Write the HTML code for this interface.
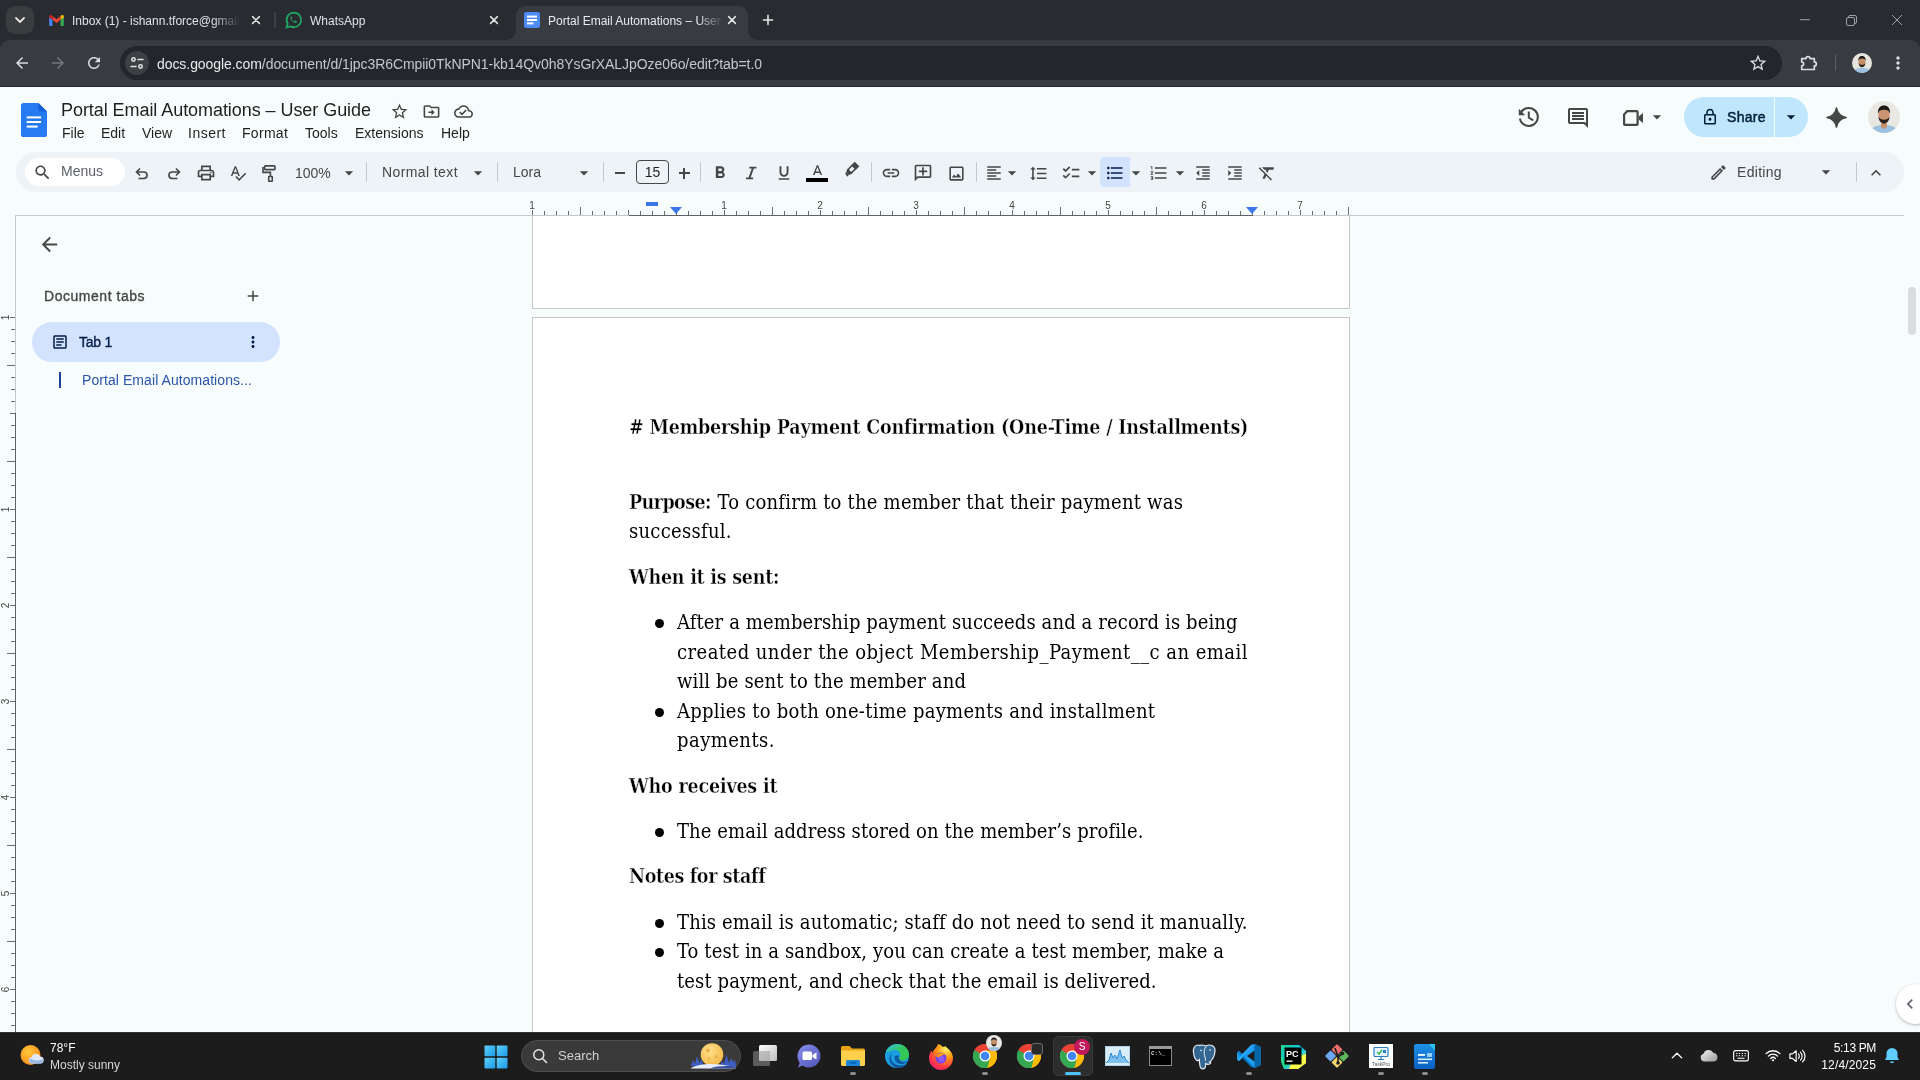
<!DOCTYPE html>
<html lang="en">
<head>
<meta charset="utf-8">
<title>Portal Email Automations – User Guide</title>
<style>
*{box-sizing:border-box;margin:0;padding:0}
html,body{width:1920px;height:1080px;overflow:hidden}
body{position:relative;will-change:transform;background:#f7fcfc;font-family:"Liberation Sans",sans-serif;color:#1f1f1f}
.abs{position:absolute}
svg{position:absolute;display:block;overflow:visible}
.t{position:absolute;white-space:nowrap;line-height:1}

/* ---------- Chrome ---------- */
#tabstrip{position:absolute;left:0;top:0;width:1920px;height:52px;background:#282b2f}
#ctoolbar{position:absolute;left:0;top:40px;width:1920px;height:47px;background:#383b41;border-bottom:1px solid #26282b;border-radius:9px 9px 0 0}
#omni{position:absolute;left:120px;top:46px;width:1662px;height:34px;border-radius:17px;background:#23262a}
.ctab{font-size:12px;color:#dfe2e6;line-height:16px}

/* ---------- Docs header ---------- */
#dtoolbar{position:absolute;left:16px;top:152px;width:1888px;height:40px;border-radius:20px;background:#eef3f7}
.menu{font-size:14px;color:#1f1f1f;top:125px}
.tb{font-size:14px;color:#444746}
.sep{position:absolute;width:1px;height:20px;top:162px;background:#c7c7c7}

/* ---------- Doc ---------- */
.page{position:absolute;left:532px;width:818px;background:#fff;border:1px solid #c7c7c7}
.doc{font-family:"DejaVu Serif Condensed","Liberation Serif",serif;font-size:20px;color:#000}
.dl{position:absolute;white-space:nowrap;line-height:30px;height:30px}
.doc b{font-weight:700;-webkit-text-stroke:0.350px #fff;font-size:19.5px}
.bul{position:absolute;width:9px;height:9px;border-radius:50%;background:#000;left:654.5px}

/* ---------- Taskbar ---------- */
#taskbar{position:absolute;left:0;top:1032px;width:1920px;height:48px;background:#1c1c1c}
.tk{font-size:12px;color:#fff}
</style>
</head>
<body>

<!-- ================= CHROME TAB STRIP ================= -->
<div id="tabstrip"></div>
<div id="ctoolbar"></div>
<div id="omni"></div>

<!-- tab search -->
<div class="abs" style="left:6px;top:6px;width:28px;height:28px;border-radius:9px;background:#3b3c3d"></div>
<svg style="left:14px;top:15px" width="12" height="10" viewBox="0 0 12 10"><path d="M2 3l4 4 4-4" fill="none" stroke="#e3e3e3" stroke-width="1.8" stroke-linecap="round" stroke-linejoin="round"/></svg>

<!-- tab 1 : gmail -->
<svg style="left:48.500px;top:14.500px" width="15" height="11" viewBox="0 0 16 12">
  <path d="M0 1.6V11a1 1 0 0 0 1 1h2.6V5.2z" fill="#4285f4"/>
  <path d="M16 1.6V11a1 1 0 0 1-1 1h-2.6V5.2z" fill="#34a853"/>
  <path d="M12.4 1.2v4L16 2.6V1.6c0-1.3-1.5-2-2.5-1.2z" fill="#fbbc04"/>
  <path d="M3.6 5.2v-4L8 4.6l4.4-3.4v4L8 8.6z" fill="#ea4335"/>
  <path d="M0 1.6v1L3.6 5.2v-4L2.5.4C1.5-.4 0 .3 0 1.6z" fill="#c5221f"/>
</svg>
<div class="t ctab" id="ct1" style="left:72px;top:13px;width:168px;overflow:hidden;-webkit-mask-image:linear-gradient(90deg,#000 140px,transparent 168px)">Inbox (1) - ishann.tforce@gmail.com</div>
<svg style="left:251px;top:15px" width="10" height="10" viewBox="0 0 10 10"><path d="M1.600 1.600l6.800 6.800M8.400 1.600l-6.800 6.800" stroke="#e3e3e3" stroke-width="1.500" stroke-linecap="round"/></svg>
<div class="abs" style="left:274px;top:12px;width:2px;height:16px;background:#3c3f43"></div>

<!-- tab 2 : whatsapp -->
<svg style="left:286px;top:12px" width="16" height="16" viewBox="0 0 16 16">
  <path d="M8 .6a7.3 7.3 0 0 0-6.3 11L.6 15.4l3.9-1A7.3 7.3 0 1 0 8 .6z" fill="none" stroke="#21a565" stroke-width="1.800"/>
  <path d="M5.6 4.2c-.3 0-.7.2-.9.6-.5.9-.2 2.300.9 3.700 1.200 1.400 2.700 2.300 3.800 2.300.6 0 1.200-.4 1.400-.9.100-.3.100-.5-.1-.6l-1.400-.7c-.2-.1-.4 0-.5.1l-.5.6c-.1.100-.3.200-.5.100-.9-.4-1.800-1.200-2.300-2.100-.1-.2 0-.3.100-.5l.4-.5c.1-.1.1-.3.1-.5l-.6-1.400c-.1-.2-.2-.2-.4-.2z" fill="#21a565"/>
</svg>
<div class="t ctab" id="ct2" style="left:310px;top:13px">WhatsApp</div>
<svg style="left:489px;top:15px" width="10" height="10" viewBox="0 0 10 10"><path d="M1.600 1.600l6.800 6.800M8.400 1.600l-6.800 6.800" stroke="#e3e3e3" stroke-width="1.500" stroke-linecap="round"/></svg>

<!-- tab 3 : active -->
<div class="abs" style="left:516px;top:6px;width:232px;height:35px;background:#383b41;border-radius:9px 9px 0 0"></div>
<svg style="left:506px;top:30px" width="10" height="10" viewBox="0 0 10 10"><path d="M10 0v10H0A10 10 0 0 0 10 0z" fill="#383b41"/></svg>
<svg style="left:748px;top:30px" width="10" height="10" viewBox="0 0 10 10"><path d="M0 0v10h10A10 10 0 0 1 0 0z" fill="#383b41"/></svg>
<svg style="left:524px;top:12px" width="16" height="16" viewBox="0 0 16 16">
  <rect x="0" y="0" width="16" height="16" rx="2.5" fill="#4d8bf5"/>
  <rect x="3" y="3.600" width="10" height="2" fill="#fff"/><rect x="3" y="7" width="10" height="2" fill="#fff"/><rect x="3" y="10.400" width="6.500" height="2" fill="#fff"/>
</svg>
<div class="t ctab" id="ct3" style="left:548px;top:13px;width:176px;overflow:hidden;color:#e8eaed;-webkit-mask-image:linear-gradient(90deg,#000 150px,transparent 176px)">Portal Email Automations – User Guide</div>
<svg style="left:727px;top:15px" width="10" height="10" viewBox="0 0 10 10"><path d="M1.600 1.600l6.800 6.800M8.400 1.600l-6.800 6.800" stroke="#e3e3e3" stroke-width="1.500" stroke-linecap="round"/></svg>
<svg style="left:762px;top:14px" width="12" height="12" viewBox="0 0 12 12"><path d="M6 1.400v9.200M1.400 6h9.200" stroke="#e3e3e3" stroke-width="1.600" stroke-linecap="round"/></svg>

<!-- window controls -->
<svg style="left:1800px;top:19px" width="10" height="2" viewBox="0 0 10 2"><path d="M0 .7h10" stroke="#9aa0a6" stroke-width="1"/></svg>
<svg style="left:1846px;top:15px" width="11" height="11" viewBox="0 0 11 11"><rect x=".5" y="2.500" width="8" height="8" rx="1.500" fill="none" stroke="#9aa0a6"/><path d="M2.500 2.500V2A1.500 1.500 0 0 1 4 .5h5A1.500 1.500 0 0 1 10.500 2v5A1.500 1.500 0 0 1 9 8.500h-.5" fill="none" stroke="#9aa0a6"/></svg>
<svg style="left:1892px;top:15px" width="10" height="10" viewBox="0 0 10 10"><path d="M0 0l10 10M10 0L0 10" stroke="#9aa0a6" stroke-width="1"/></svg>

<!-- nav buttons -->
<svg style="left:13px;top:54px" width="18" height="18" viewBox="0 0 24 24"><path d="M20 11H7.830l5.590-5.590L12 4l-8 8 8 8 1.410-1.410L7.830 13H20v-2z" fill="#dadce0"/></svg>
<svg style="left:49px;top:54px" width="18" height="18" viewBox="0 0 24 24"><path d="M12 4l-1.410 1.410L16.170 11H4v2h12.170l-5.580 5.590L12 20l8-8z" fill="#72767b"/></svg>
<svg style="left:85px;top:54px" width="18" height="18" viewBox="0 0 24 24"><path d="M17.650 6.350C16.200 4.900 14.210 4 12 4c-4.420 0-7.990 3.580-7.990 8s3.570 8 7.990 8c3.730 0 6.840-2.550 7.730-6h-2.080c-.82 2.330-3.040 4-5.650 4-3.310 0-6-2.690-6-6s2.690-6 6-6c1.660 0 3.140.69 4.220 1.780L13 11h7V4l-2.350 2.350z" fill="#dadce0"/></svg>

<!-- omnibox content -->
<div class="abs" style="left:125px;top:51px;width:24px;height:24px;border-radius:12px;background:#3c3f44"></div>
<svg style="left:129px;top:55px" width="16" height="16" viewBox="0 0 16 16"><g fill="none" stroke="#e3e3e3" stroke-width="1.500" stroke-linecap="round"><circle cx="4.500" cy="4.500" r="1.700"/><path d="M9 4.500h5"/><circle cx="11.500" cy="11.500" r="1.700"/><path d="M2 11.500h5"/></g></svg>
<div class="t" id="url" style="left:157px;top:57px;font-size:14px;letter-spacing:-0.066px;color:#e8eaed">docs.google.com<span style="color:#c4c7cb">/document/d/1jpc3R6Cmpii0TkNPN1-kb14Qv0h8YsGrXALJpOze06o/edit?tab=t.0</span></div>
<svg style="left:1748px;top:53px" width="20" height="20" viewBox="0 0 24 24"><path d="M22 9.240l-7.190-.62L12 2 9.190 8.630 2 9.240l5.460 4.730L5.820 21 12 17.270 18.180 21l-1.630-7.030L22 9.240zM12 15.400l-3.760 2.270 1-4.280-3.320-2.880 4.380-.38L12 6.100l1.710 4.040 4.380.38-3.320 2.880 1 4.280L12 15.400z" fill="#dadce0"/></svg>
<svg style="left:1798px;top:53px" width="20" height="20" viewBox="0 0 20 20"><path d="M3.700 5.600h4.300a2 2 0 0 1 4 0h4.300v3.300a2 2 0 0 1 0 4v3.600H3.700v-3.700a1.900 1.900 0 0 0 0-3.800z" fill="none" stroke="#dadce0" stroke-width="1.700" stroke-linejoin="round"/></svg>
<div class="abs" style="left:1835px;top:55px;width:1px;height:16px;background:#5b5e63"></div>
<svg style="left:1852px;top:53px" width="20" height="20" viewBox="0 0 20 20">
  <defs><clipPath id="av1"><circle cx="10" cy="10" r="10"/></clipPath></defs>
  <g clip-path="url(#av1)"><rect width="20" height="20" fill="#e6e4df"/><path d="M1 20c.5-4 4-5 9-5s8.500 1 9 5z" fill="#9cc0e0"/><ellipse cx="10" cy="9" rx="3.600" ry="4.600" fill="#c58f6b"/><path d="M6.300 8c-.3-3.500 1.500-5 3.700-5s4 1.500 3.700 5c-.5-1.800-1.500-2.500-3.700-2.500S6.800 6.200 6.300 8z" fill="#1f1a17"/><path d="M6.600 10c.3 3 1.800 4.200 3.400 4.200s3.100-1.200 3.400-4.200c-.8 1.500-2 1.800-3.400 1.800S7.400 11.500 6.600 10z" fill="#2a211c"/></g>
</svg>
<svg style="left:1888px;top:53px" width="20" height="20" viewBox="0 0 24 24"><path d="M12 8c1.100 0 2-.9 2-2s-.9-2-2-2-2 .9-2 2 .9 2 2 2zm0 2c-1.100 0-2 .9-2 2s.9 2 2 2 2-.9 2-2-.9-2-2-2zm0 6c-1.100 0-2 .9-2 2s.9 2 2 2 2-.9 2-2-.9-2-2-2z" fill="#dadce0"/></svg>

<!-- ================= DOCS HEADER ================= -->
<div id="dtoolbar"></div>

<!-- docs logo -->
<svg style="left:21px;top:103px" width="26" height="34" viewBox="0 0 26 34">
  <path d="M2.600 0H17.400l8.600 8.600v22.800a2.600 2.600 0 0 1-2.600 2.600H2.600A2.600 2.600 0 0 1 0 31.400V2.600A2.600 2.600 0 0 1 2.600 0z" fill="#267bf1"/>
  <path d="M17.400 0l8.600 8.600h-6.400a2.200 2.200 0 0 1-2.200-2.200z" fill="#1560d4"/>
  <rect x="5.700" y="13.400" width="14.400" height="2" fill="#fff"/><rect x="5.700" y="18" width="14.400" height="2" fill="#fff"/><rect x="5.700" y="22.600" width="11" height="2" fill="#fff"/>
</svg>
<div class="t" id="dtitle" style="left:61px;top:99px;font-size:18px;letter-spacing:-0.06px;line-height:22px;color:#1f1f1f">Portal Email Automations – User Guide</div>
<svg style="left:389.500px;top:101.500px" width="19" height="19" viewBox="0 0 24 24"><path d="M22 9.240l-7.190-.62L12 2 9.190 8.630 2 9.240l5.460 4.730L5.820 21 12 17.270 18.180 21l-1.630-7.030L22 9.240zM12 15.400l-3.760 2.270 1-4.280-3.320-2.880 4.380-.38L12 6.100l1.710 4.040 4.380.38-3.320 2.880 1 4.280L12 15.400z" fill="#444746"/></svg>
<svg style="left:421.500px;top:101.500px" width="19" height="19" viewBox="0 0 24 24"><path d="M20 6h-8l-2-2H4c-1.100 0-2 .9-2 2v12c0 1.100.9 2 2 2h16c1.100 0 2-.9 2-2V8c0-1.100-.9-2-2-2zm0 12H4V6h5.170l2 2H20v10zm-8-1l4-4-4-4v3H8v2h4v3z" fill="#444746"/></svg>
<svg style="left:453.500px;top:101.500px" width="19" height="19" viewBox="0 0 24 24"><path d="M19.350 10.040C18.670 6.590 15.640 4 12 4 9.110 4 6.600 5.640 5.350 8.040 2.340 8.360 0 10.910 0 14c0 3.310 2.690 6 6 6h13c2.760 0 5-2.240 5-5 0-2.640-2.050-4.780-4.650-4.960zM19 18H6c-2.210 0-4-1.790-4-4 0-2.050 1.530-3.760 3.560-3.970l1.070-.11.5-.95C8.080 7.140 9.940 6 12 6c2.620 0 4.880 1.860 5.390 4.430l.3 1.500 1.530.11c1.560.1 2.780 1.410 2.780 2.960 0 1.650-1.350 3-3 3zm-9-3.820l-2.090-2.090L6.500 13.500 10 17l6.010-6.010-1.410-1.410z" fill="#444746"/></svg>
<div class="t menu" id="m0" style="left:62px;line-height:16px">File</div>
<div class="t menu" id="m1" style="left:101px;line-height:16px">Edit</div>
<div class="t menu" id="m2" style="left:142px;line-height:16px">View</div>
<div class="t menu" id="m3" style="left:188px;line-height:16px;letter-spacing:0.500px">Insert</div>
<div class="t menu" id="m4" style="left:242px;line-height:16px;letter-spacing:0.300px">Format</div>
<div class="t menu" id="m5" style="left:305px;line-height:16px">Tools</div>
<div class="t menu" id="m6" style="left:355px;line-height:16px">Extensions</div>
<div class="t menu" id="m7" style="left:441px;line-height:16px">Help</div>
<svg style="left:1517px;top:105px" width="24" height="24" viewBox="0 0 24 24"><path d="M3.340 8.920A9 9 0 1 1 2.940 13.560" fill="none" stroke="#444746" stroke-width="2.100"/><path d="M1.800 3.800v6.400h6.400z" fill="#444746"/><path d="M11.800 6.500v6l4.300 2.800" fill="none" stroke="#444746" stroke-width="2"/></svg>
<svg style="left:1566px;top:106px" width="24" height="24" viewBox="0 0 24 24"><path d="M21.990 4c0-1.100-.89-2-1.990-2H4c-1.100 0-2 .9-2 2v12c0 1.100.9 2 2 2h14l4 4-.01-18zM20 4v13.170L18.830 16H4V4h16zM6 12h12v2H6zm0-3h12v2H6zm0-3h12v2H6z" fill="#444746"/></svg>
<svg style="left:1620px;top:105px" width="24" height="24" viewBox="0 0 24 24"><path d="M7.300 6.100h9.300a1 1 0 0 1 1 1v11.800a1 1 0 0 1-1 1H5.100a1 1 0 0 1-1-1V9.600z" fill="none" stroke="#444746" stroke-width="2.200" stroke-linejoin="round"/><path d="M18.700 11.500L23 8v10l-4.300-3.500z" fill="#444746"/></svg>
<svg style="left:1647px;top:107px" width="20" height="20" viewBox="0 0 24 24"><path d="M7 10l5 5 5-5z" fill="#444746"/></svg>
<div class="abs" style="left:1684px;top:97px;width:124px;height:40px;border-radius:20px;background:#bfe6fd"></div>
<div class="abs" style="left:1774px;top:97px;width:1px;height:40px;background:#f7fcfc"></div>
<svg style="left:1701px;top:108px" width="18" height="18" viewBox="0 0 24 24"><path d="M18 8h-1V6c0-2.760-2.240-5-5-5S7 3.240 7 6v2H6c-1.100 0-2 .9-2 2v10c0 1.100.9 2 2 2h12c1.100 0 2-.9 2-2V10c0-1.100-.9-2-2-2zM9 6c0-1.660 1.340-3 3-3s3 1.340 3 3v2H9V6zm9 14H6V10h12v10zm-6-3c1.100 0 2-.9 2-2s-.9-2-2-2-2 .9-2 2 .9 2 2 2z" fill="#001d35"/></svg>
<div class="t" id="share" style="left:1727px;top:109px;font-size:14px;line-height:16px;color:#001d35;-webkit-text-stroke:0.450px #001d35;letter-spacing:0.300px">Share</div>
<svg style="left:1781px;top:107px" width="20" height="20" viewBox="0 0 24 24"><path d="M7 10l5 5 5-5z" fill="#001d35"/></svg>
<svg style="left:1824.500px;top:105.500px" width="23" height="23" viewBox="0 0 24 24"><path d="M12 2C13 7.500 16.500 11 22 12 16.500 13 13 16.500 12 22 11 16.500 7.500 13 2 12 7.500 11 11 7.500 12 2z" fill="#444746" stroke="#444746" stroke-width="1.600" stroke-linejoin="round"/></svg>
<svg style="left:1868px;top:101px" width="32" height="32" viewBox="0 0 32 32">
  <defs><clipPath id="av2"><circle cx="16" cy="16" r="16"/></clipPath></defs>
  <g clip-path="url(#av2)"><rect width="32" height="32" fill="#e9e7e2"/><path d="M2 32c1-6 6-8 14-8s13 2 14 8z" fill="#9cc0e0"/><path d="M13 22h6v4l-3 2-3-2z" fill="#c58f6b"/><ellipse cx="16" cy="14.500" rx="5.600" ry="7.200" fill="#c9946f"/><path d="M10 13c-.6-6 2.500-8.500 6-8.500s6.600 2.500 6 8.500c-.8-3-2.400-4.200-6-4.200S10.800 10 10 13z" fill="#1d1815"/><path d="M10.500 15.500c.4 5 2.900 7 5.500 7s5.100-2 5.500-7c-1.200 2.600-3.100 3.200-5.500 3.200s-4.300-.6-5.500-3.200z" fill="#2a211c"/></g>
</svg>


<!-- docs toolbar items -->
<div class="abs" style="left:25px;top:158px;width:100px;height:28px;border-radius:14px;background:#fff"></div>
<svg style="left:33px;top:163px" width="19" height="19" viewBox="0 0 24 24"><path d="M15.500 14h-.79l-.28-.27C15.410 12.590 16 11.110 16 9.500 16 5.910 13.090 3 9.500 3S3 5.910 3 9.500 5.910 16 9.500 16c1.610 0 3.090-.59 4.230-1.570l.27.280v.79l5 4.990L20.490 19l-4.990-5zm-6 0C7.010 14 5 11.990 5 9.500S7.010 5 9.500 5 14 7.010 14 9.500 11.990 14 9.500 14z" fill="#444746"/></svg>
<div class="t tb" id="menus" style="left:61px;top:163px;line-height:16px;color:#5f6368">Menus</div>
<svg style="left:134px;top:166px" width="16" height="16" viewBox="0 0 16 16"><path d="M6 2.500L2.500 6 6 9.500M3 6h6.800a3.250 3.250 0 0 1 0 6.500H4.500" fill="none" stroke="#444746" stroke-width="1.600"/></svg>
<svg style="left:166px;top:166px" width="16" height="16" viewBox="0 0 16 16"><path d="M10 2.500L13.500 6 10 9.500M13 6H6.200a3.250 3.250 0 0 0 0 6.500h5.300" fill="none" stroke="#444746" stroke-width="1.600"/></svg>
<svg style="left:196px;top:163px" width="20" height="20" viewBox="0 0 24 24"><path d="M19 8h-1V3H6v5H5c-1.660 0-3 1.340-3 3v6h4v4h12v-4h4v-6c0-1.660-1.340-3-3-3zM8 5h8v3H8V5zm8 12v2H8v-4h8v2zm2-2v-2H6v2H4v-4c0-.55.450-1 1-1h14c.55 0 1 .45 1 1v4h-2z" fill="#444746"/></svg>
<svg style="left:196px;top:163px" width="20" height="20" viewBox="0 0 24 24"><circle cx="18" cy="11.500" r="1" fill="#444746"/></svg>
<svg style="left:229px;top:163.500px" width="18" height="18" viewBox="0 0 24 24"><path d="M12.450 16h2.090L9.430 3H7.570L2.460 16h2.090l1.120-3h5.640l1.140 3zm-6.020-5L8.500 5.480 10.570 11H6.430zm15.160.590l-8.090 8.090L9.830 16l-1.410 1.410 5.090 5.090L23 13l-1.410-1.410z" fill="#444746"/></svg>
<svg style="left:260px;top:163px" width="18" height="20" viewBox="0 0 18 20"><g fill="none" stroke="#444746" stroke-width="1.600"><rect x="4.600" y="2.900" width="10.400" height="3.700" rx=".8"/><path d="M4.600 4.700H3v4.700h7.400V13"/><rect x="8.700" y="13.500" width="3.600" height="4.800" rx=".6"/></g></svg>
<div class="t tb" id="zoom" style="left:295px;top:165px;line-height:16px">100%</div>
<svg style="left:339px;top:163px" width="20" height="20" viewBox="0 0 24 24"><path d="M7 10l5 5 5-5z" fill="#444746"/></svg>
<div class="sep" style="left:366px"></div>
<div class="t tb" id="ntext" style="left:382px;top:164px;line-height:16px;letter-spacing:0.400px">Normal text</div>
<svg style="left:467.5px;top:163px" width="20" height="20" viewBox="0 0 24 24"><path d="M7 10l5 5 5-5z" fill="#444746"/></svg>
<div class="sep" style="left:497px"></div>
<div class="t tb" id="lora" style="left:513px;top:164px;line-height:16px">Lora</div>
<svg style="left:574px;top:163px" width="20" height="20" viewBox="0 0 24 24"><path d="M7 10l5 5 5-5z" fill="#444746"/></svg>
<div class="sep" style="left:603px"></div>
<div class="abs" style="left:615px;top:172.200px;width:10px;height:1.600px;background:#444746"></div>
<div class="abs" style="left:636px;top:160px;width:33px;height:24px;border:1px solid #444746;border-radius:4px"></div>
<div class="t tb" id="fsz" style="left:636px;top:164px;width:33px;text-align:center;line-height:16px;color:#1f1f1f">15</div>
<div class="abs" style="left:678.500px;top:172.200px;width:11px;height:1.600px;background:#444746"></div><div class="abs" style="left:683.200px;top:167.500px;width:1.600px;height:11px;background:#444746"></div>
<div class="sep" style="left:700px"></div>
<svg style="left:710px;top:163px" width="20" height="20" viewBox="0 0 24 24"><path d="M15.600 10.790c.97-.67 1.650-1.770 1.650-2.790 0-2.260-1.750-4-4-4H7v14h7.040c2.090 0 3.710-1.700 3.710-3.790 0-1.520-.86-2.820-2.150-3.420zM10 6.500h3c.83 0 1.500.67 1.500 1.500s-.67 1.500-1.500 1.500h-3v-3zm3.500 9H10v-3h3.500c.83 0 1.500.67 1.500 1.500s-.67 1.500-1.500 1.500z" fill="#444746"/></svg>
<svg style="left:741px;top:163px" width="20" height="20" viewBox="0 0 24 24"><path d="M10 4.500h8.500v2.200h-3.100l-3.800 10.600h2.900v2.200H6v-2.200h3.100l3.800-10.600H10z" fill="#444746"/></svg>
<svg style="left:775px;top:164px" width="18" height="18" viewBox="0 0 24 24"><path d="M12 17c3.310 0 6-2.690 6-6V3h-2.500v8c0 1.930-1.570 3.500-3.500 3.500S8.500 12.930 8.500 11V3H6v8c0 3.310 2.690 6 6 6zm-7 2v2h14v-2H5z" fill="#444746"/></svg>
<svg style="left:808.500px;top:163px" width="17" height="17" viewBox="0 0 24 24"><path d="M11 3L5.500 17h2.250l1.120-3h6.250l1.120 3h2.250L13 3h-2zm-1.380 9L12 5.670 14.380 12H9.620z" fill="#444746"/></svg>
<div class="abs" style="left:806px;top:178px;width:22px;height:4px;background:#000"></div>
<svg style="left:840px;top:159.500px" width="21" height="21" viewBox="0 0 24 24"><g transform="rotate(45 12 12)"><path d="M8.300 1.500h7.400v5H8.300z" fill="#444746"/><path d="M9.200 6.500h5.600v7H9.200z" fill="none" stroke="#444746" stroke-width="1.800"/><path d="M8.300 13.500h7.400l-1.500 3.400H9.800z" fill="#444746"/><path d="M9.800 16.900h4.400v2.800l-4.400 -1.200z" fill="#444746"/></g></svg>
<div class="sep" style="left:871px"></div>
<svg style="left:881px;top:163px" width="20" height="20" viewBox="0 0 24 24"><path d="M3.900 12c0-1.710 1.390-3.100 3.100-3.100h4V7H7c-2.760 0-5 2.240-5 5s2.240 5 5 5h4v-1.900H7c-1.710 0-3.100-1.390-3.100-3.100zM8 13h8v-2H8v2zm9-6h-4v1.900h4c1.710 0 3.100 1.390 3.100 3.100s-1.390 3.100-3.100 3.100h-4V17h4c2.760 0 5-2.240 5-5s-2.240-5-5-5z" fill="#444746"/></svg>
<svg style="left:913px;top:162.500px" width="20" height="20" viewBox="0 0 24 24"><path d="M22 4c0-1.100-.9-2-2-2H4c-1.100 0-2 .9-2 2v12c0 1.100.9 2 2 2h14l4 4V4zm-2 13.170L18.830 16H4V4h16v13.170zM13 5h-2v4H7v2h4v4h2v-4h4V9h-4z" fill="#444746" transform="translate(24 0) scale(-1 1)"/></svg>
<svg style="left:946.500px;top:163.500px" width="19" height="19" viewBox="0 0 24 24"><path d="M19 5v14H5V5h14m0-2H5c-1.100 0-2 .9-2 2v14c0 1.100.9 2 2 2h14c1.100 0 2-.9 2-2V5c0-1.100-.9-2-2-2zm-4.860 8.860l-3 3.870L9 13.140 6 17h12l-3.860-5.140z" fill="#444746"/></svg>
<div class="sep" style="left:976px"></div>
<svg style="left:985px;top:164px" width="18" height="18" viewBox="0 0 24 24"><path d="M15 15H3v2h12v-2zm0-8H3v2h12V7zM3 13h18v-2H3v2zm0 8h18v-2H3v2zM3 3v2h18V3H3z" fill="#444746"/></svg>
<svg style="left:1002px;top:163px" width="20" height="20" viewBox="0 0 24 24"><path d="M7 10l5 5 5-5z" fill="#444746"/></svg>
<svg style="left:1028.500px;top:163.500px" width="19" height="19" viewBox="0 0 24 24"><path d="M6 7h2.500L5 3.500 1.500 7H4v10H1.500L5 20.500 8.500 17H6V7zm4-2v2h12V5H10zm0 14h12v-2H10v2zm0-6h12v-2H10v2z" fill="#444746"/></svg>
<svg style="left:1061px;top:163px" width="20" height="20" viewBox="0 0 24 24"><path d="M22 7h-9v2h9V7zm0 8h-9v2h9v-2zM5.540 11L2 7.460l1.410-1.410 2.120 2.120 4.240-4.240 1.410 1.410L5.540 11zm0 8L2 15.460l1.410-1.410 2.120 2.120 4.240-4.240 1.410 1.410L5.540 19z" fill="#444746"/></svg>
<svg style="left:1082px;top:163px" width="20" height="20" viewBox="0 0 24 24"><path d="M7 10l5 5 5-5z" fill="#444746"/></svg>
<div class="abs" style="left:1100px;top:157px;width:30px;height:30px;border-radius:4px 0 0 4px;background:#d3e3fd"></div>
<svg style="left:1105px;top:163px" width="20" height="20" viewBox="0 0 24 24"><path d="M4 10.500c-.83 0-1.500.67-1.500 1.500s.67 1.500 1.500 1.500 1.500-.67 1.500-1.500-.67-1.500-1.500-1.500zm0-6c-.83 0-1.500.67-1.500 1.500S3.170 7.500 4 7.500 5.500 6.830 5.500 6 4.830 4.500 4 4.500zm0 12c-.83 0-1.500.68-1.500 1.500s.68 1.500 1.500 1.500 1.500-.68 1.500-1.500-.67-1.500-1.500-1.500zM7 19h14v-2H7v2zm0-6h14v-2H7v2zm0-8v2h14V5H7z" fill="#041e49"/></svg>
<svg style="left:1126px;top:163px" width="20" height="20" viewBox="0 0 24 24"><path d="M7 10l5 5 5-5z" fill="#444746"/></svg>
<svg style="left:1149px;top:163px" width="20" height="20" viewBox="0 0 24 24"><path d="M2 17h2v.5H3v1h1v.5H2v1h3v-4H2v1zm1-9h1V4H2v1h1v3zm-1 3h1.800L2 13.100v.9h3v-1H3.200L5 10.900V10H2v1zm5-6v2h14V5H7zm0 14h14v-2H7v2zm0-6h14v-2H7v2z" fill="#444746"/></svg>
<svg style="left:1170px;top:163px" width="20" height="20" viewBox="0 0 24 24"><path d="M7 10l5 5 5-5z" fill="#444746"/></svg>
<svg style="left:1194px;top:164px" width="18" height="18" viewBox="0 0 24 24"><path d="M11 17h10v-2H11v2zm-8-5l4 4V8l-4 4zm0 9h18v-2H3v2zM3 3v2h18V3H3zm8 6h10V7H11v2zm0 4h10v-2H11v2z" fill="#444746"/></svg>
<svg style="left:1226px;top:164px" width="18" height="18" viewBox="0 0 24 24"><path d="M3 21h18v-2H3v2zM3 8v8l4-4-4-4zm8 9h10v-2H11v2zM3 3v2h18V3H3zm8 6h10V7H11v2zm0 4h10v-2H11v2z" fill="#444746"/></svg>
<svg style="left:1257px;top:163px" width="20" height="20" viewBox="0 0 24 24"><path d="M3.270 5L2 6.270l6.970 6.970L6.500 19h3l1.570-3.660L16.730 21 18 19.730 3.550 5.270 3.270 5zM6 5v.18L8.820 8h2.400l-.72 1.680 2.100 2.100L14.210 8H20V5H6z" fill="#444746"/></svg>
<div class="abs" style="left:1696px;top:157px;width:151px;height:30px;border-radius:15px;background:#edf1f8"></div>
<svg style="left:1708.5px;top:162.5px" width="19" height="19" viewBox="0 0 24 24"><path d="M14.060 9.020l.92.920L5.920 19H5v-.92l9.060-9.060M17.660 3c-.25 0-.51.100-.7.290l-1.830 1.830 3.750 3.750 1.830-1.830c.39-.39.39-1.020 0-1.410l-2.340-2.340c-.2-.2-.45-.29-.71-.29zm-3.600 3.190L3 17.250V21h3.750L17.810 9.940l-3.750-3.750z" fill="#444746"/></svg>
<div class="t tb" id="editing" style="left:1737px;top:164px;line-height:16px;letter-spacing:0.300px">Editing</div>
<svg style="left:1816px;top:162px" width="20" height="20" viewBox="0 0 24 24"><path d="M7 10l5 5 5-5z" fill="#444746"/></svg>
<div class="sep" style="left:1856px"></div>
<svg style="left:1866px;top:163px" width="20" height="20" viewBox="0 0 24 24"><path d="M12 8l-6 6 1.410 1.410L12 10.830l4.590 4.580L18 14z" fill="#444746"/></svg>

<!-- ================= DOC AREA ================= -->

<!-- rulers / frame -->
<div class="abs" style="left:15px;top:215px;width:1889px;height:1px;background:#c7c9c9"></div>
<div class="abs" style="left:15px;top:215px;width:1px;height:198px;background:#c7c9c9"></div>
<div class="abs" style="left:15px;top:413px;width:1px;height:619px;background:#5f6368"></div>
<div class="abs" style="left:629px;top:215px;width:624px;height:1px;background:#5f6368"></div>
<svg style="left:0;top:0" width="1920" height="220" viewBox="0 0 1920 220"><path d="M532.5 210v5M544.5 211v4M556.5 211v4M568.5 211v4M580.5 207v8M592.5 211v4M604.5 211v4M616.5 211v4M628.5 210v5M640.5 211v4M652.5 211v4M664.5 211v4M676.5 207v8M688.5 211v4M700.5 211v4M712.5 211v4M724.5 210v5M736.5 211v4M748.5 211v4M760.5 211v4M772.5 207v8M784.5 211v4M796.5 211v4M808.5 211v4M820.5 210v5M832.5 211v4M844.5 211v4M856.5 211v4M868.5 207v8M880.5 211v4M892.5 211v4M904.5 211v4M916.5 210v5M928.5 211v4M940.5 211v4M952.5 211v4M964.5 207v8M976.5 211v4M988.5 211v4M1000.5 211v4M1012.5 210v5M1024.5 211v4M1036.5 211v4M1048.5 211v4M1060.5 207v8M1072.5 211v4M1084.5 211v4M1096.5 211v4M1108.5 210v5M1120.5 211v4M1132.5 211v4M1144.5 211v4M1156.5 207v8M1168.5 211v4M1180.5 211v4M1192.5 211v4M1204.5 210v5M1216.5 211v4M1228.5 211v4M1240.5 211v4M1252.5 207v8M1264.5 211v4M1276.5 211v4M1288.5 211v4M1300.5 210v5M1312.5 211v4M1324.5 211v4M1336.5 211v4M1348.5 207v8" stroke="#6b6f73" stroke-width="1" fill="none"/><text x="532" y="209" font-family="Liberation Sans, sans-serif" font-size="10" fill="#444746" text-anchor="middle">1</text><text x="724" y="209" font-family="Liberation Sans, sans-serif" font-size="10" fill="#444746" text-anchor="middle">1</text><text x="820" y="209" font-family="Liberation Sans, sans-serif" font-size="10" fill="#444746" text-anchor="middle">2</text><text x="916" y="209" font-family="Liberation Sans, sans-serif" font-size="10" fill="#444746" text-anchor="middle">3</text><text x="1012" y="209" font-family="Liberation Sans, sans-serif" font-size="10" fill="#444746" text-anchor="middle">4</text><text x="1108" y="209" font-family="Liberation Sans, sans-serif" font-size="10" fill="#444746" text-anchor="middle">5</text><text x="1204" y="209" font-family="Liberation Sans, sans-serif" font-size="10" fill="#444746" text-anchor="middle">6</text><text x="1300" y="209" font-family="Liberation Sans, sans-serif" font-size="10" fill="#444746" text-anchor="middle">7</text><rect x="646" y="202" width="12" height="4" fill="#3b78e7"/><path d="M670 207h12l-6 7z" fill="#3b78e7"/><path d="M1246 207h12l-6 7z" fill="#3b78e7"/></svg>
<svg style="left:0;top:0" width="20" height="1032" viewBox="0 0 20 1032"><path d="M10 317.5h5M11 329.5h4M11 341.5h4M11 353.5h4M7 365.5h8M11 377.5h4M11 389.5h4M11 401.5h4M10 413.5h5M11 425.5h4M11 437.5h4M11 449.5h4M7 461.5h8M11 473.5h4M11 485.5h4M11 497.5h4M10 509.5h5M11 521.5h4M11 533.5h4M11 545.5h4M7 557.5h8M11 569.5h4M11 581.5h4M11 593.5h4M10 605.5h5M11 617.5h4M11 629.5h4M11 641.5h4M7 653.5h8M11 665.5h4M11 677.5h4M11 689.5h4M10 701.5h5M11 713.5h4M11 725.5h4M11 737.5h4M7 749.5h8M11 761.5h4M11 773.5h4M11 785.5h4M10 797.5h5M11 809.5h4M11 821.5h4M11 833.5h4M7 845.5h8M11 857.5h4M11 869.5h4M11 881.5h4M10 893.5h5M11 905.5h4M11 917.5h4M11 929.5h4M7 941.5h8M11 953.5h4M11 965.5h4M11 977.5h4M10 989.5h5M11 1001.5h4M11 1013.5h4M11 1025.5h4" stroke="#6b6f73" stroke-width="1" fill="none"/><text transform="translate(8.500 317.5) rotate(-90)" font-family="Liberation Sans, sans-serif" font-size="10" fill="#444746" text-anchor="middle">1</text><text transform="translate(8.500 509.5) rotate(-90)" font-family="Liberation Sans, sans-serif" font-size="10" fill="#444746" text-anchor="middle">1</text><text transform="translate(8.500 605.5) rotate(-90)" font-family="Liberation Sans, sans-serif" font-size="10" fill="#444746" text-anchor="middle">2</text><text transform="translate(8.500 701.5) rotate(-90)" font-family="Liberation Sans, sans-serif" font-size="10" fill="#444746" text-anchor="middle">3</text><text transform="translate(8.500 797.5) rotate(-90)" font-family="Liberation Sans, sans-serif" font-size="10" fill="#444746" text-anchor="middle">4</text><text transform="translate(8.500 893.5) rotate(-90)" font-family="Liberation Sans, sans-serif" font-size="10" fill="#444746" text-anchor="middle">5</text><text transform="translate(8.500 989.5) rotate(-90)" font-family="Liberation Sans, sans-serif" font-size="10" fill="#444746" text-anchor="middle">6</text></svg>

<!-- sidebar -->
<svg style="left:37.500px;top:232.500px" width="23" height="23" viewBox="0 0 24 24"><path d="M20 11H7.830l5.590-5.590L12 4l-8 8 8 8 1.410-1.410L7.830 13H20v-2z" fill="#444746"/></svg>
<div class="t" id="dtabs" style="left:44px;top:288px;font-size:14px;line-height:16px;color:#444746;-webkit-text-stroke:0.350px #444746;letter-spacing:0.530px">Document tabs</div>
<svg style="left:244px;top:287px" width="18" height="18" viewBox="0 0 24 24"><path d="M19 13h-6v6h-2v-6H5v-2h6V5h2v6h6v2z" fill="#444746"/></svg>
<div class="abs" style="left:32px;top:322px;width:248px;height:40px;border-radius:20px;background:#d3e3fd"></div>
<svg style="left:51px;top:333px" width="18" height="18" viewBox="0 0 24 24"><path d="M19 5v14H5V5h14m0-2H5c-1.100 0-2 .9-2 2v14c0 1.100.9 2 2 2h14c1.100 0 2-.9 2-2V5c0-1.100-.9-2-2-2zm-5 14H7v-2h7v2zm3-4H7v-2h10v2zm0-4H7V7h10v2z" fill="#041e49"/></svg>
<div class="t" id="tab1" style="left:79px;top:334px;font-size:14px;line-height:16px;color:#041e49;-webkit-text-stroke:0.350px #041e49;letter-spacing:-0.250px">Tab 1</div>
<svg style="left:244px;top:333px" width="18" height="18" viewBox="0 0 24 24"><path d="M12 8c1.100 0 2-.9 2-2s-.9-2-2-2-2 .9-2 2 .9 2 2 2zm0 2c-1.100 0-2 .9-2 2s.9 2 2 2 2-.9 2-2-.9-2-2-2zm0 6c-1.100 0-2 .9-2 2s.9 2 2 2 2-.9 2-2-.9-2-2-2z" fill="#041e49"/></svg>
<div class="abs" style="left:59px;top:372px;width:2px;height:16px;background:#1a3f95"></div>
<div class="t" id="outl" style="left:82px;top:372px;font-size:14px;line-height:16px;color:#2a56a8;letter-spacing:0.070px">Portal Email Automations...</div>

<!-- pages -->
<div class="page" style="top:216px;height:93px;border-top:none"></div>
<div class="page" style="top:317px;height:730px"></div>
<div class="abs" style="left:1908px;top:287px;width:8px;height:48px;border-radius:4px;background:#dadce0"></div>
<div class="abs" style="left:1896px;top:984px;width:40px;height:40px;border-radius:20px;background:#fff;box-shadow:0 1px 3px rgba(60,64,67,.35)"></div>
<svg style="left:1900px;top:994px" width="20" height="20" viewBox="0 0 24 24"><path d="M15.410 7.410L14 6l-6 6 6 6 1.410-1.410L10.830 12z" fill="#5f6368"/></svg>

<!-- doc text -->
<div class="doc">
<div class="dl" style="left:629px;top:412px;letter-spacing:-0.189px"><b># Membership Payment Confirmation (One-Time / Installments)</b></div>
<div class="dl" style="left:629px;top:487px;letter-spacing:-0.598px"><b>Purpose:</b></div>
<div class="dl" style="left:717.5px;top:487px;letter-spacing:0.216px">To confirm to the member that their payment was</div>
<div class="dl" style="left:629px;top:516px;letter-spacing:0.270px">successful.</div>
<div class="dl" style="left:629px;top:562px;letter-spacing:-0.258px"><b>When it is sent:</b></div>
<div class="dl" style="left:677px;top:607px;letter-spacing:0.111px">After a membership payment succeeds and a record is being</div>
<div class="dl" style="left:677px;top:637px;letter-spacing:0.455px">created under the object Membership_Payment__c an email</div>
<div class="dl" style="left:677px;top:666px;letter-spacing:0.149px">will be sent to the member and</div>
<div class="dl" style="left:677px;top:696px;letter-spacing:0.265px">Applies to both one-time payments and installment</div>
<div class="dl" style="left:677px;top:725px;letter-spacing:0.453px">payments.</div>
<div class="dl" style="left:629px;top:771px;letter-spacing:-0.200px"><b>Who receives it</b></div>
<div class="dl" style="left:677px;top:816px;letter-spacing:0.103px">The email address stored on the member’s profile.</div>
<div class="dl" style="left:629px;top:861px;letter-spacing:-0.379px"><b>Notes for staff</b></div>
<div class="dl" style="left:677px;top:907px;letter-spacing:0.155px">This email is automatic; staff do not need to send it manually.</div>
<div class="dl" style="left:677px;top:936px;letter-spacing:0.113px">To test in a sandbox, you can create a test member, make a</div>
<div class="dl" style="left:677px;top:966px;letter-spacing:0.110px">test payment, and check that the email is delivered.</div>
<div class="bul" style="top:619px"></div>
<div class="bul" style="top:708px"></div>
<div class="bul" style="top:828px"></div>
<div class="bul" style="top:919px"></div>
<div class="bul" style="top:948px"></div>
</div>
<!-- /doc text -->

<!-- ================= TASKBAR ================= -->
<div id="taskbar"><div class="abs" style="left:0;top:0;width:1920px;height:1px;background:#333"></div></div>

<!-- weather -->
<svg style="left:18px;top:1043px" width="28" height="26" viewBox="0 0 28 26">
  <defs><radialGradient id="sun" cx=".4" cy=".35" r=".7"><stop offset="0" stop-color="#ffc83a"/><stop offset="1" stop-color="#f7891c"/></radialGradient></defs>
  <circle cx="12.500" cy="12" r="10" fill="url(#sun)"/>
  <path d="M13 20.500a3.200 3.200 0 0 1 .6-6.300 4.600 4.600 0 0 1 8.700-.6 3.500 3.500 0 0 1 .7 6.900z" fill="#dfe9f7"/>
  <path d="M13 20.500a3.200 3.200 0 0 1-.8-5.200c3 2.500 9 2.800 13 .8a3.500 3.500 0 0 1-2.200 4.400z" fill="#9db9e6"/>
</svg>
<div class="t tk" id="wt1" style="left:50px;top:1040px;line-height:16px">78°F</div>
<div class="t tk" id="wt2" style="left:50px;top:1057px;line-height:16px;color:#d6d6d6">Mostly sunny</div>

<!-- start -->
<svg style="left:484px;top:1045px" width="24" height="24" viewBox="0 0 24 24">
  <defs><linearGradient id="win" x1="0" y1="0" x2="1" y2="1"><stop offset="0" stop-color="#5fd0ff"/><stop offset="1" stop-color="#1a9ae6"/></linearGradient></defs>
  <rect x=".5" y=".5" width="10.800" height="10.800" rx=".8" fill="url(#win)"/><rect x="12.700" y=".5" width="10.800" height="10.800" rx=".8" fill="url(#win)"/>
  <rect x=".5" y="12.700" width="10.800" height="10.800" rx=".8" fill="url(#win)"/><rect x="12.700" y="12.700" width="10.800" height="10.800" rx=".8" fill="url(#win)"/>
</svg>

<!-- search -->
<div class="abs" style="left:521px;top:1040px;width:220px;height:32px;border-radius:16px;background:#3a3a3a;border:1px solid #4d4d4d"></div>
<svg style="left:532px;top:1048px" width="16" height="16" viewBox="0 0 16 16"><circle cx="6.800" cy="6.800" r="5" fill="none" stroke="#e6e6e6" stroke-width="1.500"/><path d="M10.500 10.500l4 4" stroke="#e6e6e6" stroke-width="1.600" stroke-linecap="round"/></svg>
<div class="t" id="srch" style="left:558px;top:1047px;font-size:13px;line-height:18px;color:#d2d2d2">Search</div>
<svg style="left:690px;top:1041px" width="48" height="30" viewBox="0 0 48 30">
  <defs><radialGradient id="moon" cx=".4" cy=".35" r=".8"><stop offset="0" stop-color="#ffe08a"/><stop offset="1" stop-color="#f0b040"/></radialGradient></defs>
  <circle cx="22" cy="13.500" r="11.300" fill="url(#moon)"/><circle cx="18" cy="9.500" r="2" fill="#e9b24a"/><circle cx="26" cy="15.500" r="1.600" fill="#e9b24a"/><circle cx="19" cy="17.500" r="1.300" fill="#e9b24a"/>
  <path d="M1 25l2-6 2 4 2-8 2.500 7 2-4 2 7zM30 25l2-5 2 3 2.500-9 2.500 8 2-5 2 4 2-2 1 6z" fill="#3f5fc4"/>
  <path d="M1 27c8-4.500 22-5 34-2.800 4 .8 8 1.300 11 1.300v2H1z" fill="#e8eefc"/><path d="M20 27.500c6-2.500 16-3 26-2v2z" fill="#3b4fa0"/>
</svg>

<!-- task view -->
<svg style="left:753px;top:1044px" width="26" height="24" viewBox="0 0 26 24">
  <defs><linearGradient id="tv" x1="0" y1="0" x2="1" y2="1"><stop offset="0" stop-color="#fff"/><stop offset="1" stop-color="#bdbdbd"/></linearGradient></defs>
  <rect x="0" y="7" width="17" height="15" rx="1.500" fill="#5b5b5b"/><rect x="6" y="1" width="18" height="16" rx="1.500" fill="url(#tv)"/><rect x="6" y="7" width="11" height="10" fill="#9a9a9a" opacity=".55"/>
</svg>

<!-- chat -->
<svg style="left:796px;top:1043px" width="26" height="26" viewBox="0 0 26 26">
  <defs><linearGradient id="chat" x1="0" y1="0" x2="1" y2="1"><stop offset="0" stop-color="#8a8ff0"/><stop offset="1" stop-color="#4f52b2"/></linearGradient></defs>
  <path d="M13 1.500a11.500 11.500 0 1 1-6.500 21L2 24.500l1.700-4.800A11.500 11.500 0 0 1 13 1.500z" fill="url(#chat)"/>
  <rect x="6.500" y="8.500" width="9.500" height="8.500" rx="1.500" fill="#fff"/><path d="M16.500 12l4-2.800v7.600l-4-2.800z" fill="#fff"/>
</svg>

<!-- explorer -->
<svg style="left:840px;top:1044px" width="26" height="24" viewBox="0 0 26 24">
  <path d="M1 3.500A1.500 1.500 0 0 1 2.500 2h7l2.500 2.500H23.500A1.500 1.500 0 0 1 25 6v2H1z" fill="#e8a317"/>
  <path d="M1 6.500h24v14A1.500 1.500 0 0 1 23.500 22h-21A1.500 1.500 0 0 1 1 20.500z" fill="#ffd04c"/>
  <path d="M6 22v-4.500A1.500 1.500 0 0 1 7.500 16h11a1.500 1.500 0 0 1 1.500 1.500V22z" fill="#1a86d9"/><rect x="9.500" y="18" width="7" height="1.600" rx=".8" fill="#0b5cab"/>
</svg>

<!-- edge -->
<svg style="left:885px;top:1044px" width="24" height="24" viewBox="0 0 24 24">
  <defs><linearGradient id="edge1" x1="0" y1="0" x2="1" y2="0"><stop offset="0" stop-color="#0c59a4"/><stop offset="1" stop-color="#114a8b"/></linearGradient>
  <linearGradient id="edge2" x1="0" y1="0" x2="1" y2="1"><stop offset="0" stop-color="#35c1f1"/><stop offset=".5" stop-color="#34c759"/><stop offset="1" stop-color="#36c752"/></linearGradient></defs>
  <circle cx="12" cy="12" r="12" fill="#1b9de2"/>
  <path d="M1 8C3 2.500 8 0 12 0c7 0 12 5 12 10.500 0 3.500-3 6-6.500 6-2 0-3.500-.8-3.500-2 0-1 1.500-1.200 1.500-3.500C15.500 8 13 6 10 6 6 6 2.500 8.500 1 8z" fill="url(#edge2)"/>
  <path d="M7.500 18c-2-2.500-2.200-6 0-8.500C5 11 3.500 14 5 18c1.500 3.500 5 6 9 6 3.500 0 6.500-1.500 8.500-4.500-4 2.500-11 3-15-1.500z" fill="url(#edge1)"/>
  <path d="M9.500 13.500c0 4 3.500 7 8 6.500 2-.3 3.700-1.300 5-2.800-2.500 1.500-7 .8-8.500-2.200-.7-1.400-.3-2.500.2-3.200-2.500-.8-4.700-.3-4.700 1.700z" fill="#0c59a4"/>
</svg>

<!-- firefox -->
<svg style="left:929px;top:1043px" width="24" height="26" viewBox="0 0 24 26">
  <defs><radialGradient id="ff" cx=".7" cy=".2" r="1"><stop offset="0" stop-color="#fff36b"/><stop offset=".35" stop-color="#ff980e"/><stop offset=".7" stop-color="#ff3647"/><stop offset="1" stop-color="#e31587"/></radialGradient></defs>
  <path d="M12 2c1 2 3 2.500 4 1 4 3 8 7 8 12a12 12 0 0 1-24 0c0-3 1-5.500 2.500-7.500 0 1 .5 2 1 2.500C4 6.500 8 5 9 1c1 .5 2 .500 3 1z" fill="url(#ff)"/>
  <circle cx="12" cy="15" r="5.500" fill="#7542e5"/><path d="M7 13c2-3.500 7-4 10-1-2-.5-4 0-5 1.500-1 1.500-3 1.500-5-.5z" fill="#ff980e"/><circle cx="12.500" cy="16" r="3" fill="#9059ff"/>
</svg>
<svg style="left:973px;top:1044px" width="24" height="24" viewBox="-12 -12 24 24">
<circle r="12" fill="#ea4335"/>
<path d="M0 0L-10.390 -6A12 12 0 0 0 0 12z" fill="#34a853"/>
<path d="M0 0L0 12A12 12 0 0 0 10.390 -6z" fill="#fbbc04"/>
<path d="M0 0L-10.390 -6A12 12 0 0 1 10.390 -6z" fill="#ea4335"/>
<path d="M0 -5.500H10.600A12 12 0 0 1 3 11.600L5 1z" fill="#fbbc04"/>
<path d="M-4.800 2.700L-10.400 -6A12 12 0 0 0 2.500 11.700L4.700 2.800z" fill="#34a853"/>
<circle r="5.500" fill="#fff"/><circle r="4.300" fill="#4285f4"/></svg>
<svg style="left:986px;top:1035px" width="16" height="16" viewBox="0 0 20 20"><defs><clipPath id="av3"><circle cx="10" cy="10" r="10"/></clipPath></defs><g clip-path="url(#av3)"><rect width="20" height="20" fill="#e9e7e2"/><path d="M1 20c.5-4 4-5 9-5s8.500 1 9 5z" fill="#9cc0e0"/><ellipse cx="10" cy="9" rx="3.600" ry="4.600" fill="#c58f6b"/><path d="M6.300 8c-.3-3.500 1.500-5 3.700-5s4 1.500 3.700 5c-.5-1.800-1.500-2.500-3.700-2.500S6.800 6.200 6.300 8z" fill="#1f1a17"/><path d="M6.600 10c.3 3 1.800 4.200 3.400 4.200s3.100-1.200 3.400-4.200c-.8 1.500-2 1.800-3.400 1.800S7.400 11.500 6.600 10z" fill="#2a211c"/></g></svg>
<svg style="left:1017px;top:1044px" width="24" height="24" viewBox="-12 -12 24 24">
<circle r="12" fill="#ea4335"/>
<path d="M0 0L-10.390 -6A12 12 0 0 0 0 12z" fill="#34a853"/>
<path d="M0 0L0 12A12 12 0 0 0 10.390 -6z" fill="#fbbc04"/>
<path d="M0 0L-10.390 -6A12 12 0 0 1 10.390 -6z" fill="#ea4335"/>
<path d="M0 -5.500H10.600A12 12 0 0 1 3 11.600L5 1z" fill="#fbbc04"/>
<path d="M-4.800 2.700L-10.400 -6A12 12 0 0 0 2.500 11.700L4.700 2.800z" fill="#34a853"/>
<circle r="5.500" fill="#fff"/><circle r="4.300" fill="#4285f4"/></svg>
<div class="abs" style="left:1031px;top:1043px;width:12px;height:12px;border-radius:3px;background:#2a2a2a;border:1.500px solid #6a6a6a"></div>
<div class="abs" style="left:1053px;top:1036px;width:40px;height:40px;border-radius:5px;background:#2d2d2d;border:1px solid #393939"></div>
<svg style="left:1060px;top:1044px" width="24" height="24" viewBox="-12 -12 24 24">
<circle r="12" fill="#ea4335"/>
<path d="M0 0L-10.390 -6A12 12 0 0 0 0 12z" fill="#34a853"/>
<path d="M0 0L0 12A12 12 0 0 0 10.390 -6z" fill="#fbbc04"/>
<path d="M0 0L-10.390 -6A12 12 0 0 1 10.390 -6z" fill="#ea4335"/>
<path d="M0 -5.500H10.600A12 12 0 0 1 3 11.600L5 1z" fill="#fbbc04"/>
<path d="M-4.800 2.700L-10.400 -6A12 12 0 0 0 2.500 11.700L4.700 2.800z" fill="#34a853"/>
<circle r="5.500" fill="#fff"/><circle r="4.300" fill="#4285f4"/></svg>
<div class="abs" style="left:1074px;top:1039px;width:16px;height:16px;border-radius:8px;background:#c2185b"></div><div class="t" style="left:1074px;top:1040px;width:16px;text-align:center;font-size:10px;line-height:14px;color:#fff">S</div>
<div class="abs" style="left:1065px;top:1072px;width:16px;height:3px;border-radius:1.500px;background:#4cc2ff"></div>

<!-- perfmon -->
<svg style="left:1105px;top:1046px" width="25" height="20" viewBox="0 0 25 20"><rect x=".5" y=".5" width="24" height="19" fill="#d9ecfa" stroke="#b5cfe3"/><path d="M1 17l3-3 2-7 2 5 2-3 2 4 3-9 2 8 2-2 2 4 3 3z" fill="#7ec0ee"/><path d="M1 17l3-3 2-7 2 5 2-3 2 4 3-9 2 8 2-2 2 4 3 3" fill="none" stroke="#2b8ad6" stroke-width="1"/></svg>
<!-- cmd -->
<div class="abs" style="left:1149px;top:1046px;width:23px;height:20px;background:#000;border:1px solid #8a8a8a;border-top:3px solid #9a9a9a"></div>
<div class="t" style="left:1151px;top:1050px;font-size:6px;line-height:7px;color:#ddd;font-family:'Liberation Mono',monospace;font-weight:700">C:\_</div>
<!-- pgadmin -->
<svg style="left:1192px;top:1043px" width="26" height="27" viewBox="0 0 26 27">
  <path d="M6 2C2.500 2 1 5.500 1.500 9.500c.4 3.500 1.800 7 3.500 8 .8.5 1.700 0 2.300-.8.200 3 .4 6 1.200 7.800.7 1.600 3 1.800 4.300.500.800-.8.900-2.500 1-4.500 1.200 1 3.200.8 4.200.2 1.300-.8.800-1.700-.3-1.700 2.500-2 4.800-6.500 5.300-10.500.4-3.500-1.500-6.500-5.500-6.500-1.500 0-2.600.4-3.500 1C12.500 2.500 11 2 9.500 2c-1 0-1.500.300-2 .5C7 2.200 6.500 2 6 2z" fill="#336791" stroke="#e8eef5" stroke-width="1.200"/>
  <path d="M14 4c-1.500 1.500-2 4-1.800 6.500.2 2.500 1.500 4.500 1.300 7" fill="none" stroke="#e8eef5" stroke-width="1"/><circle cx="9" cy="7.500" r=".8" fill="#fff"/><circle cx="18" cy="7" r=".8" fill="#fff"/>
</svg>
<!-- vscode -->
<svg style="left:1237px;top:1044px" width="24" height="24" viewBox="0 0 24 24">
  <path d="M17.500 0L24 3v18l-6.500 3L6 13.500 2 17l-2-1.500v-7L2 7l4 3.500z" fill="#1f9cf0"/>
  <path d="M17.500 0L24 3v18l-6.500 3z" fill="#0065a9"/><path d="M17.500 6.500v11L10 12z" fill="#1c1c1c"/><path d="M0 8.500L2 7l15.500 17-3.500-1z" fill="#007acc" opacity=".9"/><path d="M0 15.500L2 17 17.500 0 14 1z" fill="#2aaaff"/>
</svg>
<!-- pycharm -->
<svg style="left:1281px;top:1044px" width="25" height="25" viewBox="0 0 25 25">
  <defs><linearGradient id="pyc" x1="0" y1="0" x2="1" y2="1"><stop offset="0" stop-color="#21d789"/><stop offset=".5" stop-color="#07c3f2"/><stop offset="1" stop-color="#fcf84a"/></linearGradient></defs>
  <path d="M0 1h18l7 6v12l-8 6H3l-3-8z" fill="url(#pyc)"/><path d="M12 14l13-4v9l-8 6H8z" fill="#fcf84a"/><path d="M0 12l8 8-5 5-3-8z" fill="#21d789"/>
  <rect x="3.500" y="3.500" width="17" height="17" fill="#000"/><text x="5" y="13" font-family="Liberation Sans, sans-serif" font-size="9" font-weight="700" fill="#fff">PC</text><rect x="5.500" y="16.500" width="6" height="1.300" fill="#fff"/>
</svg>
<!-- git ext -->
<svg style="left:1324px;top:1043px" width="26" height="26" viewBox="0 0 26 26">
  <g transform="rotate(45 13 13)"><rect x="4.500" y="4.500" width="8" height="8" rx="1" fill="#f26d6d"/><rect x="13.500" y="4.500" width="8" height="8" rx="1" fill="#5cb85c"/><rect x="4.500" y="13.500" width="8" height="8" rx="1" fill="#6ea8f5"/><rect x="13.500" y="13.500" width="8" height="8" rx="1" fill="#f5d96e"/></g>
  <path d="M11 5l3 9v6M14 14l4-3" fill="none" stroke="#1c1c1c" stroke-width="1.600"/><circle cx="14" cy="20" r="1.800" fill="#1c1c1c"/><circle cx="18.500" cy="10.500" r="1.800" fill="#1c1c1c"/>
</svg>
<!-- taskpro -->
<div class="abs" style="left:1369px;top:1044px;width:24px;height:24px;background:#fff"></div>
<svg style="left:1373px;top:1047px" width="16" height="13" viewBox="0 0 16 13"><rect x="1" y=".5" width="14" height="9" rx="1" fill="#e6f4ff" stroke="#2b7fc4" stroke-width="1.200"/><path d="M4 5l2 2 3-4" fill="none" stroke="#2bb24c" stroke-width="1.300"/><rect x="10" y="3" width="3" height="3" fill="#2b7fc4"/><path d="M5 12.500h6M8 10v2" stroke="#2b7fc4" stroke-width="1.200"/></svg>
<div class="t" style="left:1369px;top:1061px;width:24px;text-align:center;font-size:5px;line-height:6px;color:#555">TaskPro</div>
<!-- writer -->
<svg style="left:1414px;top:1044px" width="21" height="25" viewBox="0 0 21 25">
  <defs><linearGradient id="wr" x1="0" y1="0" x2="0" y2="1"><stop offset="0" stop-color="#1e90e8"/><stop offset="1" stop-color="#0b5fc4"/></linearGradient></defs>
  <path d="M2 0h12l7 7v16a2 2 0 0 1-2 2H2a2 2 0 0 1-2-2V2a2 2 0 0 1 2-2z" fill="url(#wr)"/><path d="M14 0l7 7V0z" fill="#27c4f4"/>
  <rect x="4" y="10" width="7" height="1.800" fill="#fff"/><rect x="13" y="9" width="5" height="4" fill="#8fd0ff"/><rect x="4" y="14.500" width="14" height="1.600" fill="#d6ecff"/><rect x="4" y="18" width="10" height="1.600" fill="#d6ecff"/>
</svg>
<div class="abs" style="left:850px;top:1072px;width:6px;height:3px;border-radius:1.500px;background:#8c8c8c"></div>
<div class="abs" style="left:982px;top:1072px;width:6px;height:3px;border-radius:1.500px;background:#8c8c8c"></div>
<div class="abs" style="left:1246px;top:1072px;width:6px;height:3px;border-radius:1.500px;background:#8c8c8c"></div>
<div class="abs" style="left:1378px;top:1072px;width:6px;height:3px;border-radius:1.500px;background:#8c8c8c"></div>
<div class="abs" style="left:1422px;top:1072px;width:6px;height:3px;border-radius:1.500px;background:#8c8c8c"></div>

<!-- tray -->
<svg style="left:1671px;top:1051px" width="12" height="8.600" viewBox="0 0 14 10"><path d="M1.500 8L7 2.500 12.500 8" fill="none" stroke="#fff" stroke-width="1.600" stroke-linecap="round" stroke-linejoin="round"/></svg>
<svg style="left:1700px;top:1049px" width="18" height="13" viewBox="0 0 18 13"><defs><linearGradient id="od" x1="0" y1="0" x2="1" y2="1"><stop offset="0" stop-color="#f2f2f2"/><stop offset="1" stop-color="#9a9a9a"/></linearGradient></defs><path d="M4.500 12.500A4 4 0 0 1 3.500 4.700 5.500 5.500 0 0 1 13.500 4a4.300 4.300 0 0 1 .5 8.500z" fill="url(#od)"/></svg>
<svg style="left:1733px;top:1050px" width="16" height="11.500" viewBox="0 0 18 13"><rect x=".7" y=".7" width="16.600" height="11.600" rx="1.800" fill="none" stroke="#fff" stroke-width="1.300"/><path d="M3.500 4h1.500M6.500 4H8M9.800 4h1.500M13 4h1.500M3.500 6.500h1.500M6.500 6.500H8M9.800 6.500h1.500M13 6.500h1.500M5 9.300h8" stroke="#fff" stroke-width="1.300"/></svg>
<svg style="left:1765px;top:1049px" width="16" height="12.500" viewBox="0 0 18 14"><g fill="none" stroke="#fff" stroke-width="1.500" stroke-linecap="round"><path d="M1.200 5.200a11 11 0 0 1 15.600 0"/><path d="M3.800 8a7.300 7.300 0 0 1 10.400 0"/><path d="M6.400 10.600a3.700 3.700 0 0 1 5.200 0"/></g><circle cx="9" cy="12.600" r="1.200" fill="#fff"/></svg>
<svg style="left:1789px;top:1049px" width="17" height="14.300" viewBox="0 0 19 16"><path d="M1 5.500h2.800L8 2v12L3.800 10.500H1z" fill="none" stroke="#fff" stroke-width="1.300" stroke-linejoin="round"/><g fill="none" stroke="#fff" stroke-width="1.300" stroke-linecap="round"><path d="M10.500 5.500a3.500 3.500 0 0 1 0 5"/><path d="M12.800 3.500a6.400 6.400 0 0 1 0 9"/><path d="M15.200 1.500a9.200 9.200 0 0 1 0 13"/></g></svg>
<div class="t tk" id="clk1" style="right:44px;top:1040px;line-height:16px;letter-spacing:-0.350px">5:13 PM</div>
<div class="t tk" id="clk2" style="right:44px;letter-spacing:0.150px;top:1057px;line-height:16px">12/4/2025</div>
<svg style="left:1884px;top:1047px" width="16" height="18" viewBox="0 0 16 18"><path d="M8 1a5.500 5.500 0 0 0-5.500 5.500V10L1 13h14l-1.500-3V6.500A5.500 5.500 0 0 0 8 1z" fill="#60cdff"/><path d="M5.800 14.500a2.300 2.300 0 0 0 4.400 0z" fill="#60cdff"/></svg>

</body>
</html>
